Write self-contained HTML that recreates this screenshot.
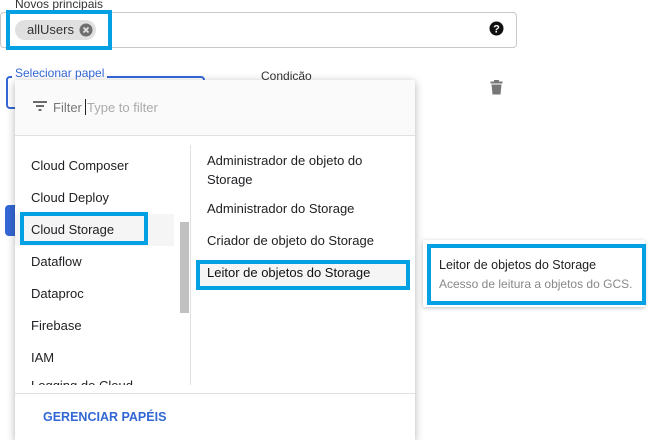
<!DOCTYPE html>
<html><head><meta charset="utf-8"><style>
*{margin:0;padding:0;box-sizing:border-box}
body{width:668px;height:429px;overflow:hidden;background:#fff;font-family:"Liberation Sans",Arial,sans-serif;font-size:13px;color:#202124;position:relative}
.a{position:absolute;white-space:nowrap}
.blue{border:4px solid #03a0e3;position:absolute}
</style></head><body>
<div class="a" style="left:15px;top:-3px;font-size:12px;color:#333">Novos principais</div>
<div class="a" style="left:0;top:12px;width:517px;height:36px;border:1px solid #c8c8c8;border-radius:4px"></div>
<div class="a" style="left:15px;top:20px;width:81px;height:20px;background:#e0e0e0;border-radius:10px"></div>
<div class="a" style="left:27px;top:22px;color:#333">allUsers</div>
<svg class="a" style="left:79px;top:23px" width="14" height="14" viewBox="0 0 14 14"><circle cx="7" cy="7" r="6.5" fill="#6f6f6f"/><path d="M4.5 4.5l5 5M9.5 4.5l-5 5" stroke="#e0e0e0" stroke-width="1.8"/></svg>
<div class="blue" style="left:6px;top:10px;width:106px;height:40px"></div>
<svg class="a" style="left:489px;top:21px" width="15" height="15" viewBox="0 0 15 15"><circle cx="7.5" cy="7.5" r="7" fill="#111"/><text x="7.5" y="11.5" font-size="11" font-weight="bold" fill="#fff" text-anchor="middle" font-family="Liberation Sans">?</text></svg>
<div class="a" style="left:6px;top:76px;width:199px;height:33px;border:2px solid #3367d6;border-radius:4px"></div>
<div class="a" style="left:12px;top:66px;background:#fff;padding:0 3px;color:#3367d6;font-size:12px">Selecionar papel</div>
<div class="a" style="left:261px;top:69px;color:#333;font-size:12px">Condição</div>
<svg class="a" style="left:490px;top:80px" width="13" height="15" viewBox="0 0 13 15"><rect x="0.5" y="1.5" width="12" height="2" fill="#777"/><rect x="4" y="0" width="5" height="2" fill="#777"/><path d="M1.5 4.5h10l-1 10h-8z" fill="#777"/></svg>
<div class="a" style="left:5px;top:205px;width:14px;height:31px;background:#3367d6;border-radius:4px"></div>
<div class="a" style="left:15px;top:80px;width:400px;height:360px;background:#fff;box-shadow:0 2px 8px rgba(0,0,0,.3)"></div>
<div class="a" style="left:15px;top:80px;width:400px;height:56px;background:#fafafa;border-bottom:1px solid #e0e0e0"></div>
<svg class="a" style="left:33px;top:101px" width="14" height="10" viewBox="0 0 14 10"><path d="M0 1h14M3 5h8M5.5 9h3" stroke="#555" stroke-width="1.8"/></svg>
<div class="a" style="left:53px;top:100px;color:#777">Filter</div>
<div class="a" style="left:85px;top:99px;width:1px;height:16px;background:#222"></div>
<div class="a" style="left:87px;top:100px;color:#aaa">Type to filter</div>
<div class="a" style="left:15px;top:214px;width:159px;height:32px;background:#f5f5f5"></div>
<div class="a" style="left:31px;top:158px;line-height:16px">Cloud Composer</div>
<div class="a" style="left:31px;top:190px">Cloud Deploy</div>
<div class="a" style="left:31px;top:222px">Cloud Storage</div>
<div class="a" style="left:31px;top:254px">Dataflow</div>
<div class="a" style="left:31px;top:286px">Dataproc</div>
<div class="a" style="left:31px;top:318px">Firebase</div>
<div class="a" style="left:31px;top:350px">IAM</div>
<div class="a" style="left:31px;top:380px;height:5px;overflow:hidden"><div style="margin-top:-2px">Logging do Cloud</div></div>
<div class="blue" style="left:20px;top:212px;width:128px;height:33px"></div>
<div class="a" style="left:180px;top:222px;width:9px;height:91px;background:#c1c1c1"></div>
<div class="a" style="left:190px;top:145px;width:1px;height:240px;background:#e0e0e0"></div>
<div class="a" style="left:207px;top:151px;line-height:19px">Administrador de objeto do<br>Storage</div>
<div class="a" style="left:207px;top:201px">Administrador do Storage</div>
<div class="a" style="left:207px;top:233px">Criador de objeto do Storage</div>
<div class="a" style="left:196px;top:260px;width:213px;height:29px;background:#f5f5f5"></div>
<div class="a" style="left:207px;top:265px;color:#111">Leitor de objetos do Storage</div>
<div class="blue" style="left:196px;top:260px;width:214px;height:30px"></div>
<div class="a" style="left:15px;top:393px;width:400px;height:1px;background:#e0e0e0"></div>
<div class="a" style="left:43px;top:410px;color:#3367d6;font-weight:bold;font-size:12.5px">GERENCIAR PAPÉIS</div>
<div class="a" style="left:423px;top:240px;width:222px;height:67px;background:#fff;box-shadow:0 1px 4px rgba(0,0,0,.25);border-radius:2px"></div>
<div class="blue" style="left:427px;top:244px;width:219px;height:61px"></div>
<div class="a" style="left:439px;top:258px;color:#222;font-size:12.5px">Leitor de objetos do Storage</div>
<div class="a" style="left:439px;top:277px;color:#888;font-size:12px">Acesso de leitura a objetos do GCS.</div>
</body></html>
